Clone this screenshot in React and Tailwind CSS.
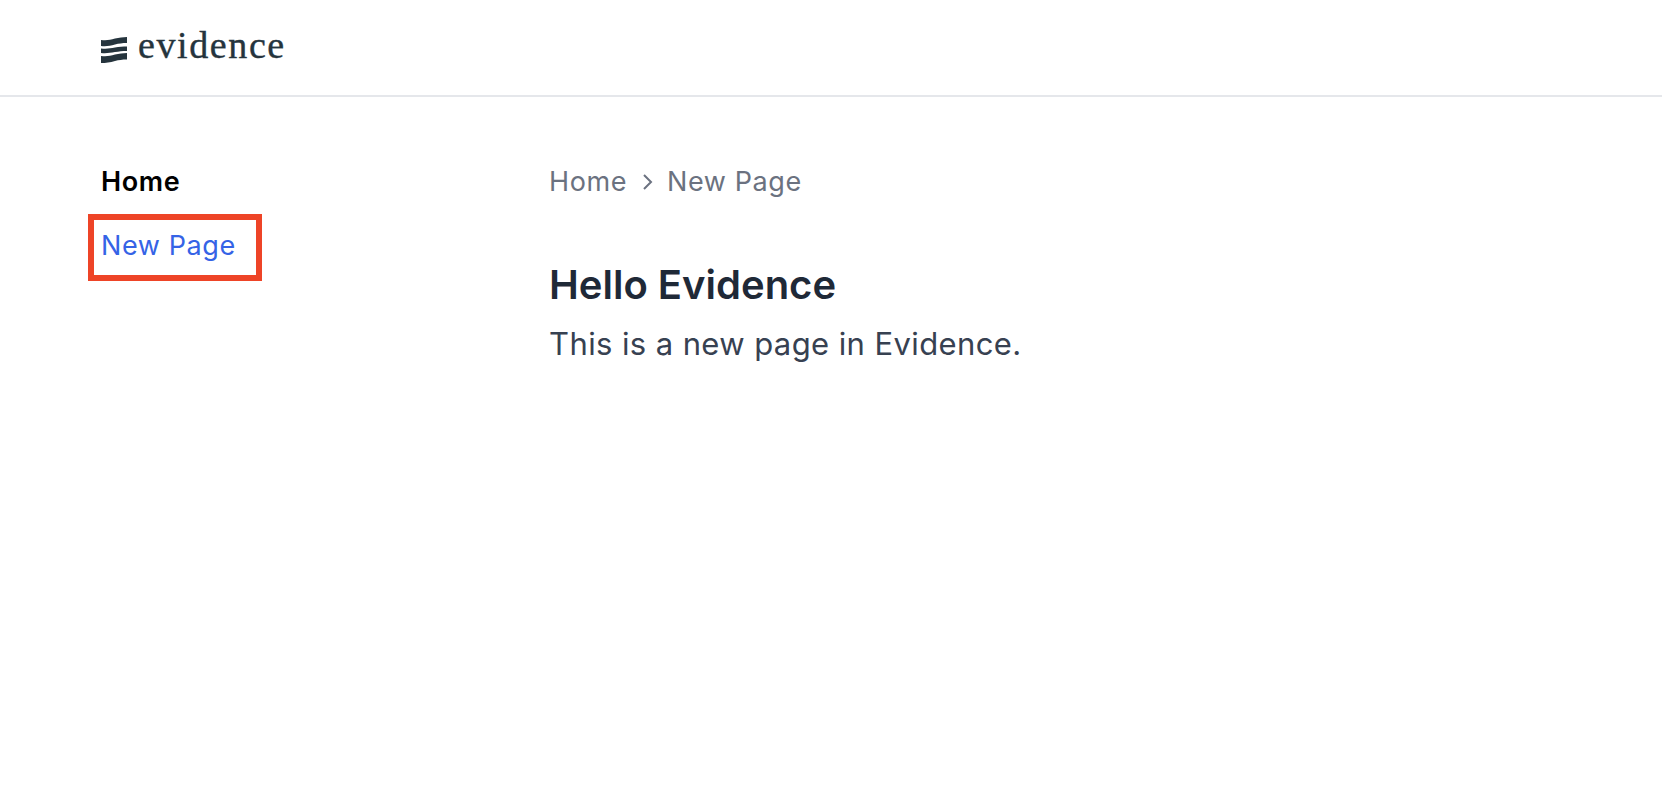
import React from "react";

const Logo = () => (
  <svg viewBox="0 0 26 26" className="w-[26px] h-[26px] shrink-0 mt-[4px]" fill="#25343d">
    <path d="M0 3 C6 3.500 9 3 14 1.500 C18 0.500 22 0 26 0 V6 C21 6 18 6.500 14 7.500 C9 9 5 9.500 0 9 Z" />
    <path d="M0 11.500 C6 12 9 11.500 14 10.500 C18 9.500 22 9.500 26 9.500 V14 C21 14 18 14.500 14 15 C9 16 5 16.500 0 16 Z" />
    <path d="M0 19 C6 19.500 9 19 14 17.500 C18 16.500 22 16 26 16 V22.500 C21 22.500 18 23 14 24 C9 25.500 5 26 0 26 Z" />
  </svg>
);

export default function App() {
  return (
    <div className="min-h-screen bg-white font-['Inter',sans-serif]">
      <header className="h-[97px] border-b-2 border-[#e5e7eb] flex items-center pl-[101px] gap-[11px]">
        <Logo />
        <span className="font-['Liberation_Serif',serif] text-[38px] leading-none tracking-[1.6px] text-[#25343d] [-webkit-text-stroke:0.4px_#25343d] -mt-[6px]">evidence</span>
      </header>

      <div className="flex">
        <aside className="w-[549px] shrink-0 pl-[88px] pt-[65px]">
          <div className="pl-[13px] text-[27px] leading-[40px] font-semibold tracking-[0.6px] text-black">Home</div>
          <div className="mt-[12px] w-[174px] h-[67px] border-[6px] border-[#ee4427] pl-[7px] pb-[4px] flex items-center">
            <a href="#" className="text-[27px] leading-[40px] tracking-[0.6px] text-[#3563e6]">New Page</a>
          </div>
        </aside>

        <main className="pt-[65px]">
          <nav className="flex items-center text-[27px] leading-[40px] tracking-[0.6px] text-[#6b7280]">
            <span>Home</span>
            <svg viewBox="0 0 24 24" className="w-[24px] h-[24px] ml-[8px] mr-[8px]" fill="none" stroke="currentColor" strokeWidth="2">
              <path d="M9 5l7 7-7 7" />
            </svg>
            <span>New Page</span>
          </nav>
          <h1 className="mt-[55px] text-[40px] leading-[56px] font-semibold text-[#1f2937]">Hello Evidence</h1>
          <p className="mt-[5px] text-[31px] leading-[52px] tracking-[0.4px] text-[#374151]">This is a new page in Evidence.</p>
        </main>
      </div>
    </div>
  );
}
